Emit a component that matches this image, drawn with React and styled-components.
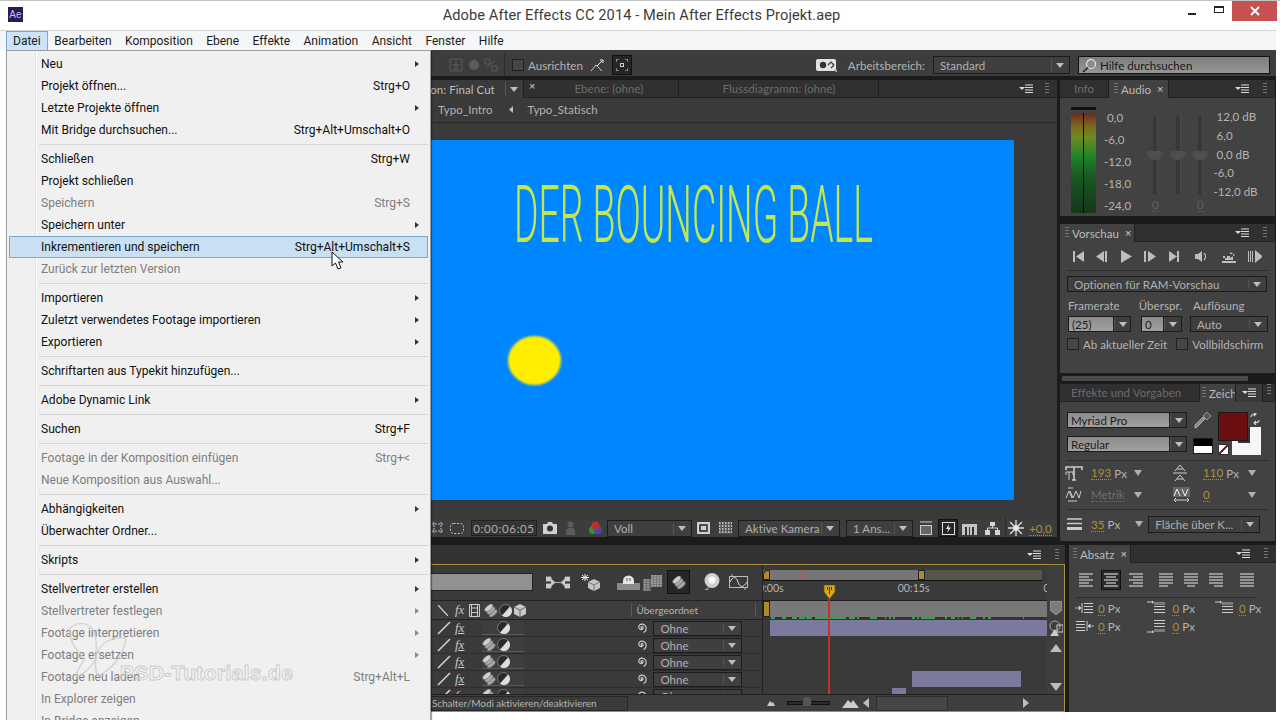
import styled, { createGlobalStyle } from "styled-components";

const Global = createGlobalStyle`
  html, body { margin: 0; padding: 0; background: #fff; }
  #root { width: 1280px; height: 720px; overflow: hidden; }
  * { box-sizing: border-box; }
`;

const Page = styled.div`
  position: relative;
  width: 1280px;
  height: 720px;
  overflow: hidden;
  background: #fff;
  display: flex;
  flex-direction: column;
  font-family: Lato, "Liberation Sans", sans-serif;
  font-size: 11.5px;
  letter-spacing: 0.05px;
  color: #b4b4b4;
`;

/* ---- window chrome ---- */
const TitleBar = styled.div`
  height: 30px;
  border-top: 1px solid #c4c4c4;
  display: flex;
  align-items: center;
  position: relative;
  flex: none;
`;
const AeLogo = styled.div`
  width: 15px;
  height: 15px;
  margin-left: 8px;
  margin-top: -2px;
  background: #2c1a57;
  color: #c9bcf2;
  font: 10px "Liberation Sans", sans-serif;
  display: flex;
  align-items: center;
  justify-content: center;
`;
const Title = styled.div`
  flex: 1;
  text-align: center;
  font: 14.6px Roboto, sans-serif;
  letter-spacing: 0.1px;
  color: #3c3c3c;
  margin-left: 72px;
  margin-top: -1px;
`;
const WinButtons = styled.div`
  display: flex;
  align-items: center;
  height: 20px;
  margin-right: 3px;
  margin-top: -9px;
`;
const MinBtn = styled.div`
  width: 8px;
  height: 2px;
  background: #222;
  margin-top: 6px;
`;
const MaxBtn = styled.div`
  width: 10px;
  height: 7px;
  border: 1px solid #222;
  border-top-width: 2px;
  margin-left: 18px;
  margin-top: -4px;
`;
const CloseBtn = styled.div`
  width: 45px;
  height: 20px;
  margin-left: 8px;
  background: #c75050;
  color: #fff;
  display: flex;
  align-items: center;
  justify-content: center;
`;
const MenuBar = styled.div`
  height: 20px;
  width: 1276px;
  flex: none;
  padding-left: 6px;
  background: #f5f6f7;
  border-top: 1px solid #d4d4d4;
  display: flex;
  font: 12px Roboto, sans-serif;
  letter-spacing: 0;
  color: #1b1b1b;
`;
const MenuTitle = styled.div`
  padding: 0 ${(p) => (p.$open ? "6px" : "5.7px")};
  line-height: 18px;
  height: 19px;
  border: 1px solid ${(p) => (p.$open ? "#7aa9d4" : "transparent")};
  border-bottom: 0;
  background: ${(p) => (p.$open ? "#cce4f7" : "transparent")};
`;

/* ---- file menu, lies over the workspace ---- */
const Menu = styled.div`
  position: absolute;
  left: 6px;
  top: 50px;
  width: 425px;
  height: 680px;
  padding: 2px 2px 0;
  border: 1px solid #9c9c9c;
  background: linear-gradient(90deg, #f0f0f0 28px, #e2e2e2 28px, #e2e2e2 29px, #fff 29px, #fff 30px, #f0f0f0 30px);
  box-shadow: 1px 1px 1px rgba(0, 0, 0, 0.35);
  font: 12.05px Roboto, sans-serif;
  letter-spacing: 0;
  z-index: 5;
`;
const MenuRow = styled.div`
  height: 22px;
  display: flex;
  align-items: center;
  padding-left: ${(p) => (p.$active ? "31px" : "32px")};
  border: ${(p) => (p.$active ? "1px solid #7da6cc" : "0")};
  background: ${(p) => (p.$active ? "#c9dff2" : "transparent")};
  color: ${(p) => (p.$off ? "#7e7e7e" : "#111")};
`;
const MenuLabel = styled.span`
  flex: 1;
`;
const Shortcut = styled.span`
  margin-right: ${(p) => (p.$active ? "17px" : "18px")};
`;
const SubArrow = styled.i`
  position: absolute;
  right: 11px;
  border-left: 4px solid ${(p) => (p.$off ? "#8a8a8a" : "#333")};
  border-top: 3.5px solid transparent;
  border-bottom: 3.5px solid transparent;
`;
const MenuSep = styled.div`
  height: 7px;
  margin-left: 30px;
  display: flex;
  align-items: center;
  &::before { content: ""; flex: 1; height: 1px; background: #d6d6d6; }
`;

const Watermark = styled.div`
  position: absolute;
  left: 68px;
  top: 622px;
  display: flex;
  align-items: flex-end;
  z-index: 6;
  pointer-events: none;
`;
const WatermarkText = styled.div`
  font: bold 21px "Liberation Sans", sans-serif;
  letter-spacing: 0.35px;
  margin-left: -10px;
  margin-bottom: -7px;
  color: rgba(255, 255, 255, 0.3);
  -webkit-text-stroke: 1px rgba(190, 190, 190, 0.75);
`;
const CursorWrap = styled.svg`
  position: absolute;
  left: 331px;
  top: 251px;
  z-index: 7;
`;

/* ---- workspace ---- */
const Workspace = styled.div`
  width: 1270px;
  height: 662px;
  margin-left: 6px;
  background: #1b1b1b;
  display: flex;
  flex-direction: column;
  flex: none;
`;
const Toolbar = styled.div`
  height: 30px;
  flex: none;
  padding-top: 4px;
  border-bottom: 4px solid #1b1b1b;
  background: #3d3d3d;
  display: flex;
  align-items: center;
  padding-right: 6px;
`;
const Spacer = styled.div`
  width: ${(p) => p.$w}px;
  flex: none;
`;
const Grow = styled.div`
  flex: 1;
`;
const Ico = styled.svg`
  display: block;
  flex: none;
  margin-left: ${(p) => p.$ml || 0}px;
  margin-top: ${(p) => p.$mt || 0}px;
  transform: ${(p) => (p.$flip ? "scaleX(-1)" : "none")};
`;
const ToolSep = styled.div`
  width: 1px;
  height: 22px;
  background: #2a2a2a;
  margin-left: ${(p) => p.$ml || 0}px;
`;
const Check = styled.div`
  width: 12px;
  height: 12px;
  flex: none;
  border: 1px solid #222;
  background: #464646;
  margin-left: ${(p) => p.$ml || 0}px;
`;
const Label = styled.span`
  flex: none;
  white-space: nowrap;
  margin-left: ${(p) => p.$ml || 0}px;
  color: ${(p) => p.$c || "#b4b4b4"};
  font-size: ${(p) => p.$fs || 11.5}px;
`;
const IconBox = styled.div`
  width: ${(p) => p.$w}px;
  height: ${(p) => p.$h}px;
  flex: none;
  margin-left: ${(p) => p.$ml || 0}px;
  background: #262626;
  border: 1px solid #111;
  display: flex;
  align-items: center;
  justify-content: center;
`;
const Drop = styled.div`
  width: ${(p) => p.$w}px;
  height: ${(p) => p.$h || 18}px;
  margin-left: ${(p) => p.$ml || 0}px;
  flex: none;
  padding-left: 6px;
  border: 1px solid #1c1c1c;
  background: #3f3f3f;
  display: flex;
  align-items: center;
  color: #b0b0b0;
  white-space: nowrap;
  overflow: hidden;
`;
const DropText = styled.span`
  flex: 1;
  overflow: hidden;
`;
const DropArrow = styled.div`
  width: 18px;
  height: 100%;
  flex: none;
  display: flex;
  align-items: center;
  justify-content: center;
  position: relative;
  &::before {
    content: "";
    position: absolute;
    left: 0;
    top: 2px;
    bottom: 2px;
    width: 1px;
    background: #555;
  }
  &::after {
    content: "";
    border-top: 5px solid #bdbdbd;
    border-left: 4px solid transparent;
    border-right: 4px solid transparent;
  }
`;
const Tri = styled.i`
  display: block;
  flex: none;
  justify-self: start;
  width: 8px;
  height: 6px;
  margin-left: ${(p) => p.$ml || 0}px;
  border-top: 6px solid #b0b0b0;
  border-left: 4px solid transparent;
  border-right: 4px solid transparent;
`;
const SearchField = styled.div`
  width: 192px;
  height: 18px;
  margin-left: 8px;
  border: 1px solid #111;
  background: linear-gradient(#7d7d7d, #979797);
  display: flex;
  align-items: center;
  padding-left: 2px;
  color: #151515;
  flex: none;
`;
const Field = styled.div`
  width: ${(p) => p.$w}px;
  height: 100%;
  flex: none;
  background: linear-gradient(#8c8c8c, #a0a0a0);
  color: #1d1d1d;
  padding-left: 3px;
  display: flex;
  align-items: center;
  border-right: 1px solid #222;
`;
const FieldDrop = styled(Drop)`
  padding-left: 0;
`;

/* ---- panels ---- */
const TopRow = styled.div`
  height: 460px;
  flex: none;
  display: flex;
`;
const ProjectPanel = styled.div`
  width: 323px;
  margin-right: 2px;
  background: #3a3a3a;
  flex: none;
`;
const CompPanel = styled.div`
  width: 726px;
  margin-right: 3px;
  margin-bottom: 3px;
  background: #3a3a3a;
  display: flex;
  flex-direction: column;
  flex: none;
`;
const TabBar = styled.div`
  height: 18px;
  flex: none;
  display: flex;
  background: #303030;
  border-bottom: 1px solid #222;
`;
const Tab = styled.div`
  width: ${(p) => p.$w}px;
  flex: ${(p) => (p.$w ? "none" : "1")};
  height: ${(p) => (p.$active ? "18px" : "17px")};
  background: ${(p) => (p.$active ? p.$bg || "#3f3f3f" : "transparent")};
  border-right: 1px solid #1f1f1f;
  display: flex;
  align-items: center;
  justify-content: ${(p) => (p.$center ? "center" : "flex-start")};
  padding-left: ${(p) => p.$pl || 0}px;
  color: ${(p) => (p.$active ? "#bcbcbc" : "#6c6c6c")};
  white-space: nowrap;
  overflow: hidden;
`;
const TabClose = styled.span`
  font: 11px "Liberation Sans", sans-serif;
  color: #cfcfcf;
  margin-left: ${(p) => p.$ml || 6}px;
`;
const Crumbs = styled.div`
  height: 25px;
  flex: none;
  display: flex;
  align-items: center;
  border-bottom: 1px solid #2a2a2a;
  padding-left: 107px;
  padding-bottom: 1px;
`;
const Viewer = styled.div`
  flex: 1;
  display: flex;
  align-items: center;
  justify-content: center;
  background: #3a3a3a;
  padding-bottom: 3px;
`;
const Canvas = styled.div`
  position: relative;
  width: 640px;
  height: 360px;
  background: #0087ff;
  overflow: hidden;
`;
const CanvasTitle = styled.div`
  position: absolute;
  left: 140px;
  top: 28px;
  font: 300 80px Roboto, sans-serif;
  letter-spacing: 0;
  white-space: nowrap;
  color: #c4e64e;
  transform-origin: left top;
  transform: scaleX(0.467);
`;
const Ball = styled.div`
  position: absolute;
  left: 134px;
  top: 196px;
  width: 53px;
  height: 49px;
  border-radius: 50%;
  background: #ffee00;
  filter: blur(1.2px);
`;
const CompFooter = styled.div`
  height: 18px;
  flex: none;
  display: flex;
  align-items: center;
  background: #3d3d3d;
`;
const TimeBox = styled.div`
  width: 66px;
  height: 16px;
  margin-left: ${(p) => p.$ml}px;
  border: 1px solid #222;
  background: #353535;
  color: #adadad;
  display: flex;
  align-items: center;
  justify-content: center;
  flex: none;
  letter-spacing: 0.6px;
`;

const RightCol = styled.div`
  width: 216px;
  flex: none;
  display: flex;
  flex-direction: column;
`;
const SidePanel = styled.div`
  height: ${(p) => p.$h}px;
  width: ${(p) => p.$w || 215}px;
  margin-bottom: ${(p) => p.$mb || 0}px;
  flex: none;
  background: #424242;
  display: flex;
  flex-direction: column;
`;
const PanelMenuIcon = () => (
  <Ico width="14" height="10" viewBox="0 0 14 10">
    <path d="M0 3h6l-3 3z" fill="#ddd" />
    <path d="M6 1h8M6 3.5h8M6 6h8M6 8.5h8" stroke="#ddd" strokeWidth="1.2" />
  </Ico>
);
const TabMenu = styled.div`
  display: flex;
  align-items: center;
  margin-left: auto;
  padding-right: 8px;
`;
const Grip = styled.div`
  width: 4px;
  height: 12px;
  flex: none;
  margin-left: ${(p) => p.$ml || 0}px;
  margin-right: ${(p) => p.$mr || 0}px;
  background: repeating-linear-gradient(#777 0 1px, transparent 1px 3px);
`;

/* audio */
const AudioBody = styled.div`
  flex: 1;
  display: flex;
  padding-left: 11px;
`;
const Vu = styled.div`
  width: 25px;
  flex: none;
  margin-top: 9px;
  height: 106px;
  border-top: 3px solid #111;
  position: relative;
  &::before {
    content: "";
    position: absolute;
    left: 0;
    right: 0;
    top: 3px;
    bottom: 0;
    background: linear-gradient(#6e2a22, #7a6a20 14%, #6f8a22 24%, #1f8428 44%, #1a5a22 62%, #15361b 100%);
  }
  &::after {
    content: "";
    position: absolute;
    left: 12px;
    top: 3px;
    bottom: 0;
    width: 1px;
    background: #0c0c0c;
  }
`;
const ScaleCol = styled.div`
  display: flex;
  flex-direction: column;
  justify-content: space-between;
  flex: none;
  width: ${(p) => p.$w}px;
  height: ${(p) => p.$h}px;
  margin-top: ${(p) => p.$mt}px;
  margin-left: ${(p) => p.$ml || 0}px;
`;
const ScaleLabel = styled.span`
  line-height: 14px;
  padding-left: ${(p) => p.$pl || 0}px;
  white-space: nowrap;
`;
const Sliders = styled.div`
  width: 67.5px;
  flex: none;
  display: flex;
  margin-left: 10px;
`;
const SliderCol = styled.div`
  width: 22.5px;
  flex: none;
  display: flex;
  flex-direction: column;
  align-items: center;
`;
const SliderTrack = styled.div`
  position: relative;
  width: 4px;
  height: 78px;
  margin-top: 18px;
  background: #383838;
  border: 1px solid #363636;
  box-shadow: 1px 0 0 #4a4a4a;
`;
const SliderThumb = styled.div`
  position: absolute;
  left: -7px;
  top: 34px;
  width: 16px;
  height: 9px;
  background: #4e4e4e;
  border-radius: 2px 2px 8px 8px;
`;
const SliderZero = styled.span`
  margin-top: 5px;
  color: #5f5f5f;
  border-bottom: 1px dotted #5f5f5f;
  line-height: 12px;
  min-height: 13px;
`;

/* vorschau */
const Transport = styled.div`
  display: flex;
  align-items: center;
  height: 29px;
  margin: 0 7px;
  padding-left: 5px;
  border-bottom: 1px solid #2b2b2b;
  flex: none;
`;
const RowLine = styled.div`
  display: flex;
  align-items: center;
  flex: none;
  height: ${(p) => p.$h}px;
  margin-top: ${(p) => p.$mt || 0}px;
  padding-left: ${(p) => p.$pl || 0}px;
`;
const HBar = styled.div`
  height: 11px;
  flex: none;
  padding-top: 3px;
  &::before {
    content: "";
    display: block;
    width: 186px;
    margin-left: 2px;
    height: 5px;
    background: #4a4a4a;
    border-radius: 1px;
  }
`;

/* zeichen */
const CharTop = styled.div`
  display: flex;
  flex: none;
  padding: 10px 0 0 7px;
  height: 58px;
`;
const CharFonts = styled.div`
  width: 123px;
  flex: none;
  display: flex;
  flex-direction: column;
  gap: 8px;
`;
const Swatches = styled.div`
  position: relative;
  flex: none;
  width: 80px;
`;
const BlackWhite = styled.div`
  position: absolute;
  left: 3px;
  top: 26px;
  width: 20px;
  height: 16px;
  border: 1px solid #1a1a1a;
  background: linear-gradient(#000 50%, #fff 50%);
`;
const NoColor = styled.div`
  position: absolute;
  left: 28px;
  top: 32px;
  width: 11px;
  height: 11px;
  background: linear-gradient(135deg, #fff 40%, #8c1b2e 40%, #8c1b2e 60%, #fff 60%);
  border: 1px solid #333;
`;
const BackColor = styled.div`
  position: absolute;
  left: 42px;
  top: 15px;
  width: 29px;
  height: 28px;
  background: #f6f6f6;
  &::after {
    content: "";
    position: absolute;
    left: 6px;
    top: 0;
    width: 12px;
    height: 16px;
    background: #333;
  }
`;
const FrontColor = styled.div`
  position: absolute;
  left: 28px;
  top: 0;
  width: 30px;
  height: 29px;
  border: 1px solid #1a1a1a;
  background: #6a0e12;
`;
const SwapIcon = styled.svg`
  position: absolute;
  left: 60px;
  top: 1px;
`;
const HLine = styled.div`
  height: 1px;
  margin: ${(p) => p.$m};
  background: #2b2b2b;
  flex: none;
`;
const CharRow = styled.div`
  display: grid;
  grid-template-columns: 26px 43px 39px 30px 45px 12px;
  align-items: center;
  height: ${(p) => p.$h || 21}px;
  padding-left: 5px;
  flex: none;
`;
const Val = styled.span`
  display: inline-flex;
  gap: 3px;
  color: #b4b4b4;
`;
const Num = styled.span`
  color: ${(p) => (p.$dim ? "#6e6e6e" : "#b28f30")};
  border-bottom: 1px dotted ${(p) => (p.$dim ? "#6e6e6e" : "#b28f30")};
  line-height: 12px;
`;

/* timeline */
const BottomRow = styled.div`
  margin-top: 5px;
  flex: 1;
  display: flex;
  min-height: 0;
`;
const TimelinePanel = styled.div`
  width: 1059px;
  flex: none;
  display: flex;
  flex-direction: column;
  background: #333;
`;
const TimelineBar = styled.div`
  height: 19px;
  flex: none;
  background: #333;
  display: flex;
  align-items: center;
  justify-content: flex-end;
  padding-right: 6px;
`;
const TimelineBody = styled.div`
  flex: 1;
  min-height: 0;
  display: flex;
  flex-direction: column;
  border: 1px solid #a8903f;
  border-left: 0;
  background: #3a3a3a;
`;
const TimelineMain = styled.div`
  flex: 1;
  min-height: 0;
  display: flex;
`;
const LayerSide = styled.div`
  width: 757px;
  flex: none;
  display: flex;
  flex-direction: column;
  overflow: hidden;
  border-right: 1px solid #222;
`;
const ToolRow = styled.div`
  height: 36px;
  flex: none;
  display: flex;
  align-items: center;
  border-bottom: 1px solid #222;
  padding-bottom: 1px;
`;
const TimelineSearch = styled.div`
  width: 527px;
  height: 18px;
  flex: none;
  background: #919191;
  border: 1px solid #222;
`;
const ColHead = styled.div`
  height: 19px;
  flex: none;
  display: flex;
  align-items: center;
  border-bottom: 1px solid #222;
  background: #3e3e3e;
`;
const HeadSep = styled.div`
  width: 1px;
  height: 14px;
  background: #5a5a5a;
  flex: none;
  margin-left: ${(p) => p.$ml || 0}px;
`;
const LayerRow = styled.div`
  height: 17px;
  flex: none;
  display: flex;
  align-items: center;
  border-bottom: 1px solid #2d2d2d;
`;
const Switch = styled.div`
  width: 14px;
  height: 14px;
  flex: none;
  margin-left: ${(p) => p.$ml || 0}px;
  border-bottom: 1px solid #5a5a5a;
  background: #3e3e3e;
  display: flex;
  align-items: center;
  justify-content: center;
`;
const Graph = styled.div`
  flex: 1;
  position: relative;
  display: flex;
  min-width: 0;
`;
const GraphMain = styled.div`
  width: 284px;
  flex: none;
  display: flex;
  flex-direction: column;
  overflow: hidden;
`;
const TimeNav = styled.div`
  height: 11px;
  width: 279px;
  margin-top: 5px;
  flex: none;
  display: flex;
  background: #57544a;
  border-bottom: 1px solid #111;
`;
const NavFill = styled.div`
  width: 148px;
  flex: none;
  background: #767676;
  position: relative;
  &::after {
    content: "";
    position: absolute;
    left: 32px;
    top: 0;
    bottom: 0;
    width: 1px;
    background: #c0554f;
  }
`;
const NavHandle = styled.div`
  width: ${(p) => p.$w}px;
  flex: none;
  background: #b0892a;
  border-radius: ${(p) => (p.$left ? "5px 0 0 0" : "0")};
  border: 1px solid #222;
`;
const Ruler = styled.div`
  height: 19px;
  flex: none;
  display: flex;
  font-size: 10.5px;
  padding-top: 1px;
  overflow: hidden;
`;
const RulerText = styled.span`
  flex: none;
  margin-left: ${(p) => p.$ml}px;
  white-space: nowrap;
  color: #b4b4b4;
`;
const WorkBar = styled.div`
  height: 17px;
  flex: none;
  display: flex;
  background: #787878;
  border-top: 1px solid #1e1e1e;
`;
const Cache = styled.svg`
  display: block;
  flex: none;
  height: 3px;
  width: 284px;
  background: #333;
`;
const Track = styled.div`
  height: 17px;
  flex: none;
  padding-left: ${(p) => p.$x || 0}px;
  display: flex;
`;
const Clip = styled.div`
  width: ${(p) => p.$w}px;
  height: 16px;
  flex: none;
  background: ${(p) => p.$c || "#7b7a9e"};
`;
const GraphSide = styled.div`
  flex: 1;
  display: flex;
  flex-direction: column;
  align-items: center;
  background: #3e3e3e;
`;
const Playhead = styled.div`
  position: absolute;
  left: 65px;
  top: 34px;
  bottom: 0;
  width: 2px;
  background: #c8302a;
`;
const PlayheadCap = styled.svg`
  position: absolute;
  left: 60px;
  top: 20px;
`;
const StatusBar = styled.div`
  height: 17px;
  flex: none;
  display: flex;
  align-items: center;
  background: #3e3e3e;
  border-top: 1px solid #222;
`;
const ModeButton = styled.div`
  width: 210px;
  height: 15px;
  flex: none;
  padding-left: 14px;
  border: 1px solid #262626;
  border-left: 0;
  background: #3b3b3b;
  font-size: 10px;
  letter-spacing: -0.05px;
  line-height: 13px;
`;
const ZoomTrack = styled.div`
  position: relative;
  width: 43px;
  height: 4px;
  flex: none;
  margin-left: ${(p) => p.$ml}px;
  background: #2a2a2a;
  border: 1px solid #111;
  &::after {
    content: "";
    position: absolute;
    left: 15px;
    top: -5px;
    width: 8px;
    height: 9px;
    background: #555;
    border-radius: 3px 3px 0 0;
  }
`;
const ScrollThumb = styled.div`
  width: 72px;
  height: 15px;
  flex: none;
  margin-left: ${(p) => p.$ml}px;
  background: #464646;
  border: 1px solid #2e2e2e;
`;
const AbsatzPanel = styled.div`
  width: 207px;
  margin-left: 4px;
  flex: none;
  background: #424242;
  display: flex;
  flex-direction: column;
`;
const AlignRow = styled.div`
  flex: none;
  display: flex;
  align-items: center;
  height: 34px;
`;
const AlignBox = styled.div`
  width: 20px;
  height: 20px;
  flex: none;
  margin-left: ${(p) => p.$ml}px;
  background: ${(p) => (p.$on ? "#2a2a2a" : "transparent")};
  border: 1px solid ${(p) => (p.$on ? "#111" : "transparent")};
  display: flex;
  align-items: center;
  justify-content: center;
`;
const IndentRow = styled.div`
  flex: none;
  display: flex;
  align-items: center;
  height: 18px;
  margin-top: ${(p) => p.$mt || 0}px;
`;

/* ---- data ---- */
const MENU = [
  { t: "Neu", sub: 1 },
  { t: "Projekt öffnen...", k: "Strg+O" },
  { t: "Letzte Projekte öffnen", sub: 1 },
  { t: "Mit Bridge durchsuchen...", k: "Strg+Alt+Umschalt+O" },
  null,
  { t: "Schließen", k: "Strg+W" },
  { t: "Projekt schließen" },
  { t: "Speichern", k: "Strg+S", off: 1 },
  { t: "Speichern unter", sub: 1 },
  { t: "Inkrementieren und speichern", k: "Strg+Alt+Umschalt+S", active: 1 },
  { t: "Zurück zur letzten Version", off: 1 },
  null,
  { t: "Importieren", sub: 1 },
  { t: "Zuletzt verwendetes Footage importieren", sub: 1 },
  { t: "Exportieren", sub: 1 },
  null,
  { t: "Schriftarten aus Typekit hinzufügen..." },
  null,
  { t: "Adobe Dynamic Link", sub: 1 },
  null,
  { t: "Suchen", k: "Strg+F" },
  null,
  { t: "Footage in der Komposition einfügen", k: "Strg+<", off: 1 },
  { t: "Neue Komposition aus Auswahl...", off: 1 },
  null,
  { t: "Abhängigkeiten", sub: 1 },
  { t: "Überwachter Ordner..." },
  null,
  { t: "Skripts", sub: 1 },
  null,
  { t: "Stellvertreter erstellen", sub: 1 },
  { t: "Stellvertreter festlegen", sub: 1, off: 1 },
  { t: "Footage interpretieren", sub: 1, off: 1 },
  { t: "Footage ersetzen", sub: 1, off: 1 },
  { t: "Footage neu laden", k: "Strg+Alt+L", off: 1 },
  { t: "In Explorer zeigen", off: 1 },
  { t: "In Bridge anzeigen", off: 1 },
];
const CACHE = [[8, 4], [19, 4], [29, 5], [36, 6], [43, 6], [52, 31], [86, 6], [94, 2], [107, 7], [122, 1], [126, 2], [130, 2], [149, 3], [154, 2], [158, 14], [182, 2], [188, 4], [195, 1], [199, 1], [207, 6], [220, 2], [225, 3], [260, 1]];
const G = "#bdbdbd";

/* ---- little drawings ---- */
const Half = ({ ml }) => (
  <Ico $ml={ml} width="13" height="13" viewBox="0 0 13 13">
    <circle cx="6.5" cy="6.5" r="6" fill="#2a2a2a" stroke="#bbb" strokeWidth=".5" />
    <path d="M11 2.5A6 6 0 0 1 3 11.5z" fill="#ddd" />
  </Ico>
);
const Pills = ({ ml }) => (
  <Ico $ml={ml} width="14" height="13" viewBox="0 0 14 13">
    <g transform="rotate(-40 7 6.5)" fill="#a8a8a8" stroke="#555" strokeWidth=".5">
      <ellipse cx="7" cy="10" rx="5" ry="2.4" />
      <ellipse cx="7" cy="6.5" rx="5" ry="2.4" />
      <ellipse cx="7" cy="3" rx="5" ry="2.4" fill="#d0d0d0" />
    </g>
  </Ico>
);
const Spiral = ({ ml }) => (
  <Ico $ml={ml} width="12" height="12" viewBox="0 0 12 12">
    <path d="M6 6.500a1 1 0 1 1 1-1.500c.5 1.500-1 3-2.500 2.500S2 5 3.500 3.200 8 1.800 9.500 4s.5 5.500-2 6.500" fill="none" stroke="#ccc" strokeWidth="1.200" />
  </Ico>
);
const Fx = styled.span`
  font: italic 13px "Liberation Serif", serif;
  letter-spacing: 0;
  color: #c8c8c8;
  flex: none;
  margin-left: ${(p) => p.$ml || 0}px;
  text-decoration: ${(p) => (p.$u ? "underline" : "none")};
`;
const Lines = ({ ml, kind }) => {
  const rows = [1, 4, 7, 10, 13];
  const span = (i) => {
    if (kind === "left") return [0, i % 2 ? 10 : 14];
    if (kind === "right") return [i % 2 ? 4 : 0, 14];
    if (kind === "center") return [i % 2 ? 2 : 0, i % 2 ? 12 : 14];
    if (kind === "jl") return [0, i === 4 ? 9 : 14];
    if (kind === "jc") return [i === 4 ? 3 : 0, i === 4 ? 11 : 14];
    if (kind === "jr") return [i === 4 ? 5 : 0, 14];
    return [0, 14];
  };
  return (
    <Ico $ml={ml} width="14" height="14" viewBox="0 0 14 14">
      {rows.map((y, i) => (
        <path key={y} d={`M${span(i)[0]} ${y}H${span(i)[1]}`} stroke="#cfcfcf" strokeWidth="1.200" />
      ))}
    </Ico>
  );
};
const Indent = ({ ml, flip }) => (
  <Ico $ml={ml} $flip={flip} width="19" height="12" viewBox="0 0 19 12">
    <path d="M0 6h4M4 4v4l2-2z" stroke="#ccc" fill="#ccc" strokeWidth=".8" />
    <path d="M7 1v10" stroke="#ccc" />
    <path d="M9 1.500h9M9 4.500h9M9 7.500h9M9 10.500h9" stroke="#ccc" />
  </Ico>
);
const SpaceIco = ({ ml, low }) => (
  <Ico $ml={ml} width="19" height="14" viewBox="0 0 19 14">
    <path d={low ? "M0 13h5" : "M0 1h5"} stroke="#ccc" />
    <path d={low ? "M5 11v4l2-2z" : "M5 -1v4l2-2z"} fill="#ccc" />
    <path d={low ? "M7 1.500h11M7 4.500h11M7 7.500h11" : "M7 5.500h11M7 8.500h11M7 11.500h11"} stroke="#ccc" />
    <path d={low ? "M7 10h11v3H7z" : "M7 1h11v3H7z"} fill="#7a7a7a" />
  </Ico>
);

function FileMenu() {
  return (
    <Menu>
      {MENU.map((m, i) =>
        m ? (
          <MenuRow key={i} $off={m.off} $active={m.active}>
            <MenuLabel>{m.t}</MenuLabel>
            {m.k && <Shortcut $active={m.active}>{m.k}</Shortcut>}
            {m.sub && <SubArrow $off={m.off} />}
          </MenuRow>
        ) : (
          <MenuSep key={i} />
        )
      )}
    </Menu>
  );
}

function TopToolbar() {
  return (
    <Toolbar>
      <Spacer $w={443} />
      <Ico width="14" height="14" viewBox="0 0 14 14">
        <path d="M1 1h12v12H1zM7 2v10M3 7h8M4 10c1 2 5 2 6 0" fill="none" stroke="#5a5a5a" />
      </Ico>
      <Ico $ml={5} width="12" height="12" viewBox="0 0 12 12"><circle cx="6" cy="6" r="5" fill="#5c5c5c" /></Ico>
      <Ico $ml={4} width="14" height="14" viewBox="0 0 14 14">
        <path d="M1 1h5v5H1zM8 8h5v5H8zM3 9l8-6" fill="none" stroke="#5a5a5a" />
      </Ico>
      <ToolSep $ml={6} />
      <Check $ml={7} />
      <Label $ml={4}>Ausrichten</Label>
      <Ico $ml={7} width="15" height="15" viewBox="0 0 15 15">
        <path d="M1 13l5-6 6 6" fill="none" stroke="#ccc" />
        <path d="M7 8l5-5M10 2h3v3" fill="none" stroke="#eee" />
      </Ico>
      <IconBox $ml={7} $w={20} $h={20}>
        <Ico width="12" height="12" viewBox="0 0 12 12">
          <path d="M0 3V0h3M9 0h3v3M12 9v3H9M3 12H0V9" fill="none" stroke="#ccc" />
          <rect x="4.500" y="4.500" width="3" height="3" fill="none" stroke="#ccc" />
        </Ico>
      </IconBox>
      <Grow />
      <Ico width="22" height="14" viewBox="0 0 22 14">
        <rect x="0" y="1" width="20" height="12" rx="2" fill="#e2e2e2" />
        <circle cx="7" cy="7" r="3.200" fill="#333" />
        <path d="M12 7l3-3 3 3M15 10l3-3" fill="none" stroke="#333" strokeWidth="1.200" />
        <path d="M21 11v3h-2z" fill="#bbb" />
      </Ico>
      <Label $ml={10}>Arbeitsbereich:</Label>
      <Drop $ml={8} $w={137}><DropText>Standard</DropText><DropArrow /></Drop>
      <SearchField>
        <Ico width="17" height="15" viewBox="0 0 17 15">
          <circle cx="10" cy="6" r="4.500" fill="#8c8c8c" stroke="#eee" strokeWidth="1.100" />
          <path d="M7 9.500L2 14" stroke="#222" strokeWidth="1.500" />
        </Ico>
        <Label $ml={2} $c="#171717">Hilfe durchsuchen</Label>
      </SearchField>
    </Toolbar>
  );
}

function CompFooterBar() {
  return (
    <CompFooter>
      <Spacer $w={101} />
      <Ico width="11" height="13" viewBox="0 0 11 13">
        <path d="M2 0v11M0 2h11M9 0v11M0 9h11" stroke="#bbb" fill="none" strokeDasharray="2 1" />
      </Ico>
      <Ico $ml={7} width="14" height="11" viewBox="0 0 14 11">
        <rect x=".5" y=".5" width="13" height="10" rx="3" fill="none" stroke="#c4c4c4" strokeDasharray="2 1.500" />
      </Ico>
      <TimeBox $ml={7}>0:00:06:05</TimeBox>
      <Ico $ml={6} width="14" height="12" viewBox="0 0 14 12">
        <path d="M0 2h4l1-2h4l1 2h4v10H0z" fill="#d0d0d0" />
        <circle cx="7" cy="6.500" r="3" fill="#333" />
      </Ico>
      <Ico $ml={9} width="9" height="14" viewBox="0 0 9 14">
        <circle cx="4.500" cy="3.500" r="3" fill="#5c5c5c" />
        <path d="M0 14V9l2-2h5l2 2v5z" fill="#5c5c5c" />
      </Ico>
      <Ico $ml={13} width="15" height="14" viewBox="0 0 15 14">
        <circle cx="5" cy="9" r="4" fill="#2f8f3a" />
        <circle cx="10" cy="9" r="4" fill="#4a46b8" />
        <circle cx="7.500" cy="4.500" r="4" fill="#b8322c" />
      </Ico>
      <Drop $ml={4} $w={85} $h={17}><DropText>Voll</DropText><DropArrow /></Drop>
      <Ico $ml={5} width="13" height="12" viewBox="0 0 13 12">
        <rect width="13" height="12" fill="#d0d0d0" />
        <rect x="3" y="3" width="7" height="6" fill="none" stroke="#222" strokeWidth="1.500" />
      </Ico>
      <Ico $ml={9} width="13" height="12" viewBox="0 0 13 12">
        <rect width="13" height="12" fill="#555" />
        <path d="M0 1h13M0 4h13M0 7h13M0 10h13" stroke="#ddd" strokeDasharray="1.500 1.500" strokeWidth="1.500" />
      </Ico>
      <Drop $ml={6} $w={102} $h={17}><DropText>Aktive Kamera</DropText><DropArrow /></Drop>
      <Drop $ml={6} $w={67} $h={17}><DropText>1 Ans...</DropText><DropArrow /></Drop>
      <Ico $ml={7} width="12" height="14" viewBox="0 0 12 14">
        <path d="M0 1h12M3 1v0" stroke="#ccc" />
        <rect x=".5" y="4.500" width="11" height="9" fill="#666" stroke="#ccc" />
      </Ico>
      <IconBox $ml={6} $w={20} $h={18}>
        <Ico width="13" height="13" viewBox="0 0 13 13">
          <rect x=".5" y=".5" width="12" height="12" fill="none" stroke="#ddd" />
          <path d="M7 2L4 7h2.500L5 11l4-5.500H6.500z" fill="#eee" />
        </Ico>
      </IconBox>
      <Ico $ml={4} width="15" height="13" viewBox="0 0 15 13">
        <path d="M0 2h15v11H0z" fill="#c4c4c4" />
        <path d="M3 5h2v8H3zM7 5h1v8H7zM10 5h2v8h-2z" fill="#333" />
      </Ico>
      <Ico $ml={8} width="15" height="13" viewBox="0 0 15 13">
        <rect x="5" y="0" width="5" height="4" fill="#d4d4d4" />
        <rect x="0" y="8" width="5" height="5" fill="#d4d4d4" />
        <rect x="10" y="8" width="5" height="5" fill="#d4d4d4" />
        <path d="M2.500 8V6h10v2M7.500 4v2" fill="none" stroke="#d4d4d4" />
      </Ico>
      <ToolSep $ml={5} />
      <Ico $ml={2} width="16" height="16" viewBox="0 0 16 16">
        <circle cx="8" cy="8" r="3" fill="#e8e8e8" />
        <path d="M8 0v5M8 11v5M0 8h5M11 8h5M2 2l4 4M10 10l4 4M14 2l-4 4M6 10l-4 4" stroke="#e0e0e0" strokeWidth="1.300" />
      </Ico>
      <Label $ml={5}><Num>+0,0</Num></Label>
    </CompFooter>
  );
}

function AudioPanel() {
  return (
    <SidePanel $h={136} $mb={8}>
      <TabBar>
        <Tab $w={49} $center>Info</Tab>
        <Tab $active $w={60} $pl={5} $bg="#424242">
          <Grip $mr={3} />Audio<TabClose>×</TabClose>
        </Tab>
        <TabMenu><PanelMenuIcon /><Grip $ml={14} /></TabMenu>
      </TabBar>
      <AudioBody>
        <Vu />
        <ScaleCol $w={30} $h={102} $mt={13} $ml={8}>
          <ScaleLabel $pl={3}>0,0</ScaleLabel>
          <ScaleLabel>-6,0</ScaleLabel>
          <ScaleLabel>-12,0</ScaleLabel>
          <ScaleLabel>-18,0</ScaleLabel>
          <ScaleLabel>-24,0</ScaleLabel>
        </ScaleCol>
        <Sliders>
          {["0", "", "0"].map((z, i) => (
            <SliderCol key={i}>
              <SliderTrack><SliderThumb /></SliderTrack>
              <SliderZero>{z}</SliderZero>
            </SliderCol>
          ))}
        </Sliders>
        <ScaleCol $w={50} $h={89} $mt={12} $ml={2}>
          <ScaleLabel $pl={3}>12,0 dB</ScaleLabel>
          <ScaleLabel $pl={3}>6,0</ScaleLabel>
          <ScaleLabel $pl={3}>0,0 dB</ScaleLabel>
          <ScaleLabel>-6,0</ScaleLabel>
          <ScaleLabel>-12,0 dB</ScaleLabel>
        </ScaleCol>
      </AudioBody>
    </SidePanel>
  );
}

function PreviewPanel() {
  const p = { width: 14, height: 13, viewBox: "0 0 14 13", fill: G };
  return (
    <SidePanel $h={149}>
      <TabBar>
        <Tab $active $w={75} $pl={5} $bg="#424242">
          <Grip $mr={3} />Vorschau<TabClose>×</TabClose>
        </Tab>
        <TabMenu><PanelMenuIcon /><Grip $ml={14} /></TabMenu>
      </TabBar>
      <Transport>
        <Ico {...p}><path d="M1 1h2v11H1zM12 1v11L4 6.500z" /></Ico>
        <Ico {...p} $ml={9}><path d="M9 1v11L1 6.500zM10 1h2v11h-2z" /></Ico>
        <Ico {...p} $ml={10}><path d="M2 0v13l11-6.500z" /></Ico>
        <Ico {...p} $ml={10}><path d="M1 1h2v11H1zM5 1v11l8-5.500z" /></Ico>
        <Ico {...p} $ml={10}><path d="M2 1v11l8-5.500zM10 1h2v11h-2z" /></Ico>
        <Ico {...p} $ml={13}><path d="M1 4h3l4-3v11l-4-3H1z" /><path d="M10 3c2 2 2 5 0 7" fill="none" stroke={G} strokeWidth="1.300" /></Ico>
        <Ico {...p} $ml={14}><path d="M1 6h2v4h8V4H8V2l5 3-5 3V6H5v2H1zM0 11h14v2H0z" /></Ico>
        <Ico {...p} $ml={10} width={16}><path d="M1 1h1v11H1zM3 1h1v11H3zM5 1h1v11H5zM8 0v13l8-6.500z" /></Ico>
      </Transport>
      <RowLine $h={16} $mt={5} $pl={7}>
        <Drop $w={200} $h={16}><DropText>Optionen für RAM-Vorschau</DropText><DropArrow /></Drop>
      </RowLine>
      <RowLine $h={16} $mt={5} $pl={8}>
        <Label>Framerate</Label>
        <Label $ml={19}>Überspr.</Label>
        <Label $ml={11}>Auflösung</Label>
      </RowLine>
      <RowLine $h={16} $mt={3} $pl={8}>
        <FieldDrop $w={63} $h={16}><Field $w={45}>(25)</Field><DropArrow /></FieldDrop>
        <FieldDrop $ml={10} $w={41} $h={16}><Field $w={22}>0</Field><DropArrow /></FieldDrop>
        <Drop $ml={8} $w={78} $h={16}><DropText>Auto</DropText><DropArrow /></Drop>
      </RowLine>
      <RowLine $h={14} $mt={5} $pl={7}>
        <Check />
        <Label $ml={4}>Ab aktueller Zeit</Label>
        <Check $ml={9} />
        <Label $ml={4}>Vollbildschirm</Label>
      </RowLine>
    </SidePanel>
  );
}

function CharacterPanel() {
  return (
    <SidePanel $h={157}>
      <TabBar>
        <Tab $w={140} $pl={11}>Effekte und Vorgaben</Tab>
        <Tab $active $w={36} $pl={2} $bg="#424242"><Grip $mr={3} />Zeich</Tab>
        <Tab $active $w={27} $pl={6} $bg="#3a3a3a"><PanelMenuIcon /></Tab>
        <Grip $ml={4} />
      </TabBar>
      <CharTop>
        <CharFonts>
          <FieldDrop $w={120} $h={16}><Field $w={102}>Myriad Pro</Field><DropArrow /></FieldDrop>
          <FieldDrop $w={120} $h={16}><Field $w={102}>Regular</Field><DropArrow /></FieldDrop>
        </CharFonts>
        <Swatches>
          <Ico $ml={4} width="17" height="17" viewBox="0 0 17 17">
            <path d="M1 16l2-1 8-8-2-2-8 8z" fill="#8a8a8a" stroke="#ddd" strokeWidth=".6" />
            <path d="M9 4l4-4 4 4-4 4z" fill="#555" stroke="#ccc" strokeWidth=".6" />
          </Ico>
          <BlackWhite />
          <NoColor />
          <BackColor />
          <FrontColor />
          <SwapIcon width="10" height="12" viewBox="0 0 10 12">
            <path d="M1 4c0-2 2-3 5-3M4 0l2 1-2 2M9 7c0 2-2 3-5 3M6 8l-2 2 2 2" fill="none" stroke="#ddd" strokeWidth="1.100" />
          </SwapIcon>
        </Swatches>
      </CharTop>
      <HLine $m="0 7px" />
      <CharRow $h={24}>
        <Ico width="18" height="15" viewBox="0 0 18 15">
          <path d="M1 4V1h16v3M9 1v13M7 14h4" fill="none" stroke="#ccc" strokeWidth="1.600" />
          <path d="M1 9V6h7v3M4 6v8" fill="none" stroke="#ccc" />
        </Ico>
        <Val><Num>193</Num> Px</Val>
        <Tri />
        <Ico width="14" height="18" viewBox="0 0 14 18">
          <path d="M2 7l5-6 5 6M4 5h6M2 17l5-6 5 6M4 15h6M0 9h14" fill="none" stroke="#ccc" />
        </Ico>
        <Val><Num>110</Num> Px</Val>
        <Tri />
      </CharRow>
      <CharRow $h={20}>
        <Ico width="17" height="18" viewBox="0 0 17 18">
          <path d="M1 12L4 5l3 7M5 5l3 7 3-7 3 7 2-7" fill="none" stroke="#ccc" />
          <path d="M3 2h5M3 15h9" stroke="#ccc" />
        </Ico>
        <Val><Num $dim>Metrik</Num></Val>
        <Tri />
        <Ico width="17" height="16" viewBox="0 0 17 16">
          <rect width="17" height="10" fill="#666" />
          <path d="M1 9l3-7 3 7M9 2l3 7 3-7" fill="none" stroke="#eee" />
          <path d="M1 13h15M3 11l-2 2 2 2M14 11l2 2-2 2" fill="none" stroke="#ccc" />
        </Ico>
        <Val><Num>0</Num></Val>
        <Tri />
      </CharRow>
      <HLine $m="4px 7px 0" />
      <RowLine $h={28} $pl={7}>
        <Ico width="15" height="13" viewBox="0 0 15 13">
          <path d="M0 1h15M0 5.500h15" stroke="#ccc" strokeWidth="1.500" />
          <path d="M0 9h15v3H0z" fill="#ccc" />
        </Ico>
        <Label $ml={9}><Num>35</Num></Label>
        <Label $ml={3}>Px</Label>
        <Tri $ml={15} />
        <Drop $ml={5} $w={112} $h={17}><DropText>Fläche über K...</DropText><DropArrow /></Drop>
      </RowLine>
    </SidePanel>
  );
}

function Timeline() {
  return (
    <TimelinePanel>
      <TimelineBar><PanelMenuIcon /><Grip $ml={14} /></TimelineBar>
      <TimelineBody>
        <TimelineMain>
          <LayerSide>
            <ToolRow>
              <TimelineSearch />
              <Ico $ml={13} width="24" height="15" viewBox="0 0 24 15">
                <path d="M0 2h5v4H0zM0 9h5v4H0zM19 2h5v4h-5zM19 9h5v4h-5zM5 4l4 3.500L5 11M19 4l-4 3.500 4 3.500M9 7.500h6" fill="#ccc" stroke="#ccc" strokeWidth=".8" />
              </Ico>
              <Ico $ml={11} width="19" height="17" viewBox="0 0 19 17">
                <path d="M4 0v7M0 3.500h8M1 1l6 5M7 1L1 6" stroke="#eee" />
                <path d="M7 8l6-3 6 3v6l-6 3-6-3z" fill="#c4c4c4" />
                <path d="M7 8l6 3 6-3M13 11v6" fill="none" stroke="#777" />
              </Ico>
              <Ico $ml={17} width="23" height="16" viewBox="0 0 23 16">
                <path d="M0 9h23v7H0z" fill="#8a8a8a" />
                <path d="M6 7a5.500 5.500 0 0 1 11 0v3H6z" fill="#e6e6e6" />
                <path d="M10 4v3M13 4v3" stroke="#555" />
              </Ico>
              <Ico $ml={3} width="19" height="17" viewBox="0 0 19 17">
                <path d="M8 1h11v12H8z" fill="#777" />
                <path d="M0 5h8v12H0z" fill="#6a6a6a" />
                <path d="M9 1v12M12 1v12M15 1v12M18 1v12M2 5v12M5 5v12" stroke="#c4c4c4" strokeDasharray="1.500 1" />
              </Ico>
              <IconBox $ml={5} $w={23} $h={24}><Pills /></IconBox>
              <Ico $ml={13} width="17" height="18" viewBox="0 0 17 18">
                <circle cx="9" cy="7.500" r="7.500" fill="#d0d0d0" />
                <circle cx="9" cy="7" r="3.500" fill="#fff" />
                <path d="M6 14l-5 3 4 0" fill="#999" />
              </Ico>
              <Ico $ml={9} width="19" height="16" viewBox="0 0 19 16">
                <rect x=".5" y="2.500" width="18" height="11" fill="none" stroke="#bbb" />
                <path d="M1 8c3-6 6-6 8 0s5 6 9 0" fill="none" stroke="#ddd" />
                <path d="M3 0v2M16 14v2" stroke="#bbb" />
              </Ico>
            </ToolRow>
            <ColHead>
              <Spacer $w={432} />
              <Ico width="10" height="11" viewBox="0 0 10 11"><path d="M0 0l10 11" stroke="#ccc" strokeWidth="1.300" /></Ico>
              <Fx $ml={7}>fx</Fx>
              <Ico $ml={5} width="11" height="13" viewBox="0 0 11 13">
                <path d="M.5 .5h10v12H.5zM2.500 .5v12M8.500 .5v12M2.500 4h6M2.500 8.500h6" fill="none" stroke="#ccc" />
              </Ico>
              <Pills ml={4} />
              <Half ml={1} />
              <Ico $ml={2} width="12" height="13" viewBox="0 0 12 13">
                <path d="M6 0l6 3v7l-6 3-6-3V3z" fill="#c8c8c8" />
                <path d="M0 3l6 3 6-3M6 6v7" fill="none" stroke="#666" />
              </Ico>
              <HeadSep $ml={105} />
              <Label $ml={4} $fs={10}>Übergeordnet</Label>
              <HeadSep $ml={57} />
            </ColHead>
            {[0, 1, 2, 3, 4].map((r) => (
              <LayerRow key={r}>
                <Spacer $w={431} />
                <Ico width="14" height="14" viewBox="0 0 14 14"><path d="M1 13L13 1" stroke="#d8d8d8" strokeWidth="1.500" /></Ico>
                <Fx $ml={4} $u>fx</Fx>
                <Switch $ml={18}>{r > 0 && <Pills />}</Switch>
                <Switch><Half /></Switch>
                <Switch />
                <Spiral ml={112} />
                <Drop $ml={5} $w={89} $h={15}><DropText>Ohne</DropText><DropArrow /></Drop>
              </LayerRow>
            ))}
          </LayerSide>
          <Graph>
            <GraphMain>
              <TimeNav>
                <NavHandle $w={7} $left />
                <NavFill />
                <NavHandle $w={7} />
              </TimeNav>
              <Ruler>
                <RulerText $ml={-5}>0:00s</RulerText>
                <RulerText $ml={114}>00:15s</RulerText>
                <RulerText $ml={114}>00</RulerText>
              </Ruler>
              <WorkBar><NavHandle $w={7} /></WorkBar>
              <Cache viewBox="0 0 284 3">
                {CACHE.map(([x, w]) => <rect key={x} x={x} y="0" width={w} height="2" fill="#2aa84a" />)}
              </Cache>
              <Track $x={7}><Clip $w={277} /></Track>
              <Track />
              <Track />
              <Track $x={149}><Clip $w={109} /></Track>
              <Track $x={129}><Clip $w={14} /></Track>
            </GraphMain>
            <GraphSide>
              <Ico $mt={36} width="12" height="14" viewBox="0 0 12 14">
                <path d="M0 0h12v9l-6 5-6-5z" fill="#7c7c7c" stroke="#bbb" strokeWidth=".6" />
              </Ico>
              <Ico $mt={5} width="14" height="16" viewBox="0 0 14 16">
                <circle cx="6" cy="6" r="5" fill="none" stroke="#aaa" />
                <rect x="8" y="5" width="6" height="7" fill="none" stroke="#ccc" />
                <path d="M6 9l4 7H1z" fill="#ccc" />
              </Ico>
              <Ico $mt={8} width="12" height="8" viewBox="0 0 12 8"><path d="M6 0l6 8H0z" fill={G} /></Ico>
              <Ico $mt={31} width="12" height="8" viewBox="0 0 12 8"><path d="M6 8l6-8H0z" fill={G} /></Ico>
            </GraphSide>
            <Playhead />
            <PlayheadCap width="13" height="14" viewBox="0 0 13 14">
              <path d="M1 0h11v7l-5.500 7L1 7z" fill="#d6a820" stroke="#6a5410" strokeWidth=".7" />
              <path d="M4.500 2v3M6.500 2v3M8.500 2v3M6.500 5v4" stroke="#4a3a08" />
            </PlayheadCap>
          </Graph>
        </TimelineMain>
        <StatusBar>
          <Spacer $w={412} />
          <ModeButton>Schalter/Modi aktivieren/deaktivieren</ModeButton>
          <Spacer $w={139} />
          <Ico width="8" height="6" viewBox="0 0 8 6"><path d="M0 6l3-5 2 2 1-1 2 4z" fill="#ccc" /></Ico>
          <ZoomTrack $ml={12} />
          <Ico $ml={12} width="17" height="9" viewBox="0 0 17 9"><path d="M0 9l6-8 3 3 2-3 6 8z" fill="#ccc" /></Ico>
          <Ico $ml={4} width="6" height="10" viewBox="0 0 6 10"><path d="M6 0v10L0 5z" fill={G} /></Ico>
          <ScrollThumb $ml={7} />
          <Spacer $w={75} />
          <Ico width="6" height="10" viewBox="0 0 6 10"><path d="M0 0v10l6-5z" fill={G} /></Ico>
        </StatusBar>
      </TimelineBody>
    </TimelinePanel>
  );
}

function ParagraphPanel() {
  return (
    <AbsatzPanel>
      <TabBar>
        <Tab $active $w={62} $pl={4} $bg="#424242">
          <Grip $mr={3} />Absatz<TabClose>×</TabClose>
        </Tab>
        <TabMenu><PanelMenuIcon /><Grip $ml={14} /></TabMenu>
      </TabBar>
      <AlignRow>
        <AlignBox $ml={7}><Lines kind="left" /></AlignBox>
        <AlignBox $ml={5} $on><Lines kind="center" /></AlignBox>
        <AlignBox $ml={5}><Lines kind="right" /></AlignBox>
        <AlignBox $ml={10}><Lines kind="jl" /></AlignBox>
        <AlignBox $ml={5}><Lines kind="jc" /></AlignBox>
        <AlignBox $ml={5}><Lines kind="jr" /></AlignBox>
        <AlignBox $ml={11}><Lines /></AlignBox>
      </AlignRow>
      <HLine $m="0 20px 0 7px" />
      <IndentRow $mt={1}>
        <Indent ml={6} />
        <Label $ml={4}><Num>0</Num> Px</Label>
        <SpaceIco ml={27} />
        <Label $ml={6}><Num>0</Num> Px</Label>
        <SpaceIco ml={20} />
        <Label $ml={5}><Num>0</Num> Px</Label>
      </IndentRow>
      <IndentRow>
        <Indent ml={6} flip />
        <Label $ml={4}><Num>0</Num> Px</Label>
        <SpaceIco ml={27} low />
        <Label $ml={6}><Num>0</Num> Px</Label>
      </IndentRow>
    </AbsatzPanel>
  );
}

export default function App() {
  return (
    <Page>
      <Global />
      <TitleBar>
        <AeLogo>Ae</AeLogo>
        <Title>Adobe After Effects CC 2014 - Mein After Effects Projekt.aep</Title>
        <WinButtons>
          <MinBtn />
          <MaxBtn />
          <CloseBtn>
            <svg width="10" height="10" viewBox="0 0 10 10"><path d="M1 1l8 8M9 1l-8 8" stroke="#fff" strokeWidth="1.800" /></svg>
          </CloseBtn>
        </WinButtons>
      </TitleBar>
      <MenuBar>
        {["Datei", "Bearbeiten", "Komposition", "Ebene", "Effekte", "Animation", "Ansicht", "Fenster", "Hilfe"].map((m, i) => (
          <MenuTitle key={m} $open={i === 0}>{m}</MenuTitle>
        ))}
      </MenuBar>
      <Workspace>
        <TopToolbar />
        <TopRow>
          <ProjectPanel />
          <CompPanel>
            <TabBar>
              <Tab $active $w={193} $pl={48} $bg="#3a3a3a">Komposition: Final Cut<Spacer $w={10} /><DropArrow /></Tab>
              <TabClose $ml={5}>×</TabClose>
              <Spacer $w={4} />
              <Tab $w={140} $center>Ebene: (ohne)</Tab>
              <Tab $w={200} $center>Flussdiagramm: (ohne)</Tab>
              <TabMenu><PanelMenuIcon /><Grip $ml={12} /></TabMenu>
            </TabBar>
            <Crumbs>
              <Label>Typo_Intro</Label>
              <Ico $ml={16} width="4" height="7" viewBox="0 0 4 7"><path d="M4 0v7L0 3.500z" fill={G} /></Ico>
              <Label $ml={15}>Typo_Statisch</Label>
            </Crumbs>
            <Viewer>
              <Canvas>
                <CanvasTitle>DER BOUNCING BALL</CanvasTitle>
                <Ball />
              </Canvas>
            </Viewer>
            <CompFooterBar />
          </CompPanel>
          <RightCol>
            <AudioPanel />
            <PreviewPanel />
            <HBar />
            <CharacterPanel />
          </RightCol>
        </TopRow>
        <BottomRow>
          <Timeline />
          <ParagraphPanel />
        </BottomRow>
      </Workspace>
      <FileMenu />
      <Watermark>
        <svg width="62" height="56" viewBox="0 0 62 56" fill="none" stroke="rgba(205,205,205,.8)" strokeWidth="1.500">
          <path d="M2 6c8-7 20-6 24 4 3 8 3 20 1 28-4 8-12 15-19 17 1-7 5-13 9-18C9 30 1 20 2 6z" />
          <path d="M28 36C30 24 40 14 58 16c-2 16-12 30-28 38-3-5-3-12-2-18z" />
        </svg>
        <WatermarkText>PSD-Tutorials.de</WatermarkText>
      </Watermark>
      <CursorWrap width="15" height="20" viewBox="0 0 15 20">
        <path d="M1 1v14l3.500-3 2.500 6 3-1.200-2.500-5.800H12z" fill="#fff" stroke="#111" strokeWidth="1" />
      </CursorWrap>
    </Page>
  );
}
